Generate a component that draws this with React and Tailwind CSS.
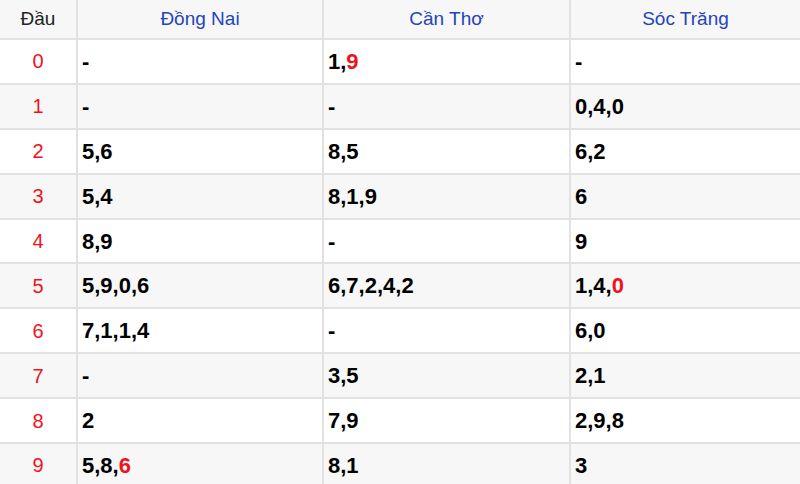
const rows = [
  { d: "0", a: [["-"]], b: [["1,"], ["9", true]], c: [["-"]] },
  { d: "1", a: [["-"]], b: [["-"]], c: [["0,4,0"]] },
  { d: "2", a: [["5,6"]], b: [["8,5"]], c: [["6,2"]] },
  { d: "3", a: [["5,4"]], b: [["8,1,9"]], c: [["6"]] },
  { d: "4", a: [["8,9"]], b: [["-"]], c: [["9"]] },
  { d: "5", a: [["5,9,0,6"]], b: [["6,7,2,4,2"]], c: [["1,4,"], ["0", true]] },
  { d: "6", a: [["7,1,1,4"]], b: [["-"]], c: [["6,0"]] },
  { d: "7", a: [["-"]], b: [["3,5"]], c: [["2,1"]] },
  { d: "8", a: [["2"]], b: [["7,9"]], c: [["2,9,8"]] },
  { d: "9", a: [["5,8,"], ["6", true]], b: [["8,1"]], c: [["3"]] },
];

function Nums({ parts, bg }) {
  return (
    <div className={`flex items-center pl-[4px] text-[22px] font-bold text-black ${bg}`}>
      {parts.map(([t, red], i) => (
        <span key={i} className={red ? "text-[#f0121c]" : ""}>
          {t}
        </span>
      ))}
    </div>
  );
}

export default function App() {
  return (
    <div
      className="grid h-[484px] w-[800px] grid-cols-[76px_244px_245px_1fr] grid-rows-[38px_repeat(10,42.9px)] gap-[2px] overflow-hidden bg-[#e2e2e2] font-['Liberation_Sans',Arial,sans-serif]"
    >
      <div className="flex items-center justify-center bg-[#f7f7f7] text-[19px] text-[#222]">Đầu</div>
      <div className="flex items-center justify-center bg-[#f7f7f7] text-[19px] text-[#2444bd]">Đồng Nai</div>
      <div className="flex items-center justify-center bg-[#f7f7f7] text-[19px] text-[#2444bd]">Cần Thơ</div>
      <div className="flex items-center justify-center bg-[#f7f7f7] text-[19px] text-[#2444bd]">Sóc Trăng</div>
      {rows.map((r, i) => {
        const bg = i % 2 === 1 ? "bg-[#f7f7f7]" : "bg-white";
        return [
          <div key={`d${i}`} className={`flex items-center justify-center text-[20px] text-[#f0121c] ${bg}`}>
            {r.d}
          </div>,
          <Nums key={`a${i}`} parts={r.a} bg={bg} />,
          <Nums key={`b${i}`} parts={r.b} bg={bg} />,
          <Nums key={`c${i}`} parts={r.c} bg={bg} />,
        ];
      })}
    </div>
  );
}
